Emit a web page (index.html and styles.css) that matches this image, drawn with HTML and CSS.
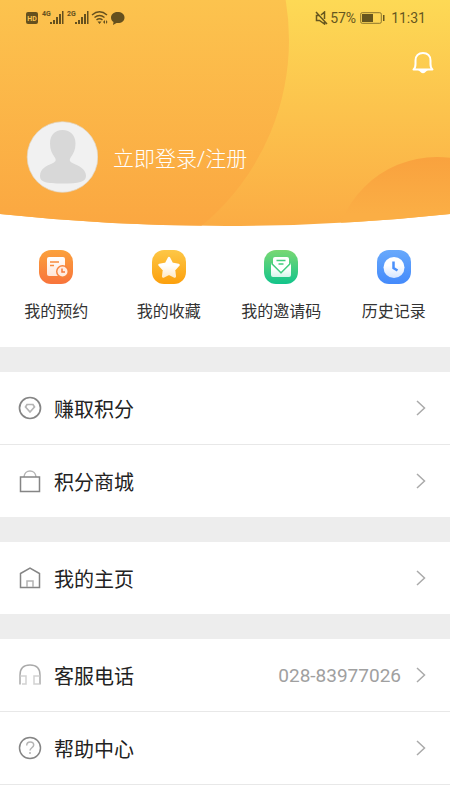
FILE: index.html
```html
<!DOCTYPE html>
<html lang="zh-CN">
<head>
<meta charset="utf-8">
<meta name="viewport" content="width=device-width, initial-scale=1">
<title>我的</title>
<link rel="stylesheet" href="styles.css">
</head>
<body>
<header class="hero">
  <svg class="hero-bg" viewBox="0 0 450 226" preserveAspectRatio="none" aria-hidden="true">
    <defs>
      <linearGradient id="base" x1="0" y1="0" x2="0" y2="1"><stop offset="0" stop-color="#fdd955"/><stop offset="1" stop-color="#fbac44"/></linearGradient>
      <linearGradient id="big" gradientUnits="userSpaceOnUse" x1="0" y1="0" x2="0" y2="226"><stop offset="0" stop-color="#fcc34e"/><stop offset="1" stop-color="#fba741"/></linearGradient>
      <linearGradient id="small" gradientUnits="userSpaceOnUse" x1="0" y1="157" x2="0" y2="214"><stop offset="0" stop-color="#f9a23e"/><stop offset="1" stop-color="#fbae45"/></linearGradient>
      <clipPath id="curve"><path d="M0 0H450V214Q225 238 0 214Z"/></clipPath>
    </defs>
    <g clip-path="url(#curve)">
      <rect width="450" height="226" fill="url(#base)"/>
      <circle cx="48" cy="40" r="241" fill="url(#big)"/>
      <circle cx="437" cy="260" r="103" fill="url(#small)"/>
    </g>
  </svg>
  <div class="status">
    <div class="status-side">
      <svg width="100" height="16" viewBox="0 0 100 16" fill="#65501e" aria-hidden="true">
        <rect x="1" y="2" width="12" height="12" rx="2"/>
        <text class="hd" x="7" y="11" text-anchor="middle">HD</text>
        <text class="net" x="17" y="6">4G</text>
        <path d="M25 12h2v2h-2zM28 10h2v4h-2zM31 7h2v7h-2zM34 4h2v10h-2zM37 1h1.500v13H37z"/>
        <text class="net" x="42" y="6">2G</text>
        <path d="M50 12h2v2h-2zM53 10h2v4h-2zM56 7h2v7h-2zM59 4h2v10h-2zM62 1h1.500v13H62z"/>
        <g fill="none" stroke="#65501e" stroke-width="1.500"><path d="M67 5Q74.500-1.500 82 5M69.500 7.500q5-4 10 0M71.500 10q3-2.500 6 0"/></g>
        <path d="M72.500 11.500h4l-2 2.500zM78 12l2-2v4zM81 10l1.500 2-1.500 2z"/>
        <path d="M92.500 2C88.500 2 86 4.500 86 7.500c0 2 1 3.500 2.500 4.500l-.5 3 3.500-2c5 .5 8-2 8-5.500S96.500 2 92.500 2z"/>
      </svg>
    </div>
    <div class="status-side">
      <svg width="13" height="14" viewBox="0 0 13 14" fill="none" stroke="#66561f" stroke-width="1.500" aria-hidden="true"><path d="M1 1l11 12M9.500 8V1L6 4M4 4.500H1.500v5h3l5 3.500v-2"/></svg>
      <span>57%</span>
      <svg class="battery" width="25" height="12" viewBox="0 0 25 12" aria-hidden="true"><rect x=".7" y=".7" width="20.600" height="10.600" rx="1.500" fill="none" stroke="#8c762d"/><path fill="#66561f" d="M2 2h11v8H2zM23 3h1.500v6H23z"/></svg>
      <span>11:31</span>
    </div>
  </div>
  <div class="tools">
    <button class="bell" type="button" aria-label="消息">
      <svg width="22" height="24" viewBox="0 0 22 24"><path d="M1.500 18.500Q3.500 17 3.500 13V9.500C3.500 5 6.500 2 11 2s7.500 3 7.500 7.500V13q0 4 2 5.500z" fill="none" stroke="#fff" stroke-width="2" stroke-linejoin="round"/><path d="M6 19h10q-1.500 1-2.500 2-2.500 2.500-5 0-1-1-2.500-2z" fill="#fff"/></svg>
    </button>
  </div>
  <a class="login" href="#login">
    <svg width="72" height="72" viewBox="0 0 72 72" aria-hidden="true"><circle cx="36.500" cy="36" r="35.300" fill="#f1f1f1" stroke="#dfd9cd" stroke-width=".7"/><path d="M36.500 9c-8 0-12.500 5.500-12.500 13.500 0 6 2 10 4.500 13.500 2 3 1.500 4.500-1.500 6C20 45 14 48 14 55c0 6 6 7.500 22.500 7.500S60 61 60 55c0-7-7-10-13.500-13-3-1.500-3.500-3-1.500-6 2.500-3.500 4.500-7.500 4.500-13.500C49.500 14.500 44.500 9 36.500 9z" fill="#d8d8d8"/></svg>
    <span>立即登录/注册</span>
  </a>
</header>
<main>
  <nav class="quick">
    <a href="#booking">
      <svg width="36" height="36" viewBox="0 0 36 36" aria-hidden="true">
        <defs><linearGradient id="q1" x1="0" y1="0" x2="0" y2="1"><stop offset="0" stop-color="#fba13c"/><stop offset="1" stop-color="#f8743b"/></linearGradient><linearGradient id="w1" x1="0" y1="0" x2="0" y2="1"><stop offset="0" stop-color="#fff"/><stop offset="1" stop-color="#ffe6d8"/></linearGradient></defs>
        <rect x="1" y="1" width="34" height="34" rx="12" fill="url(#q1)"/><rect x="9" y="8" width="18" height="19" rx="2" fill="url(#w1)"/><path d="M12 13h9M12 16.500h4" stroke="#f88b3c" stroke-width="1.500"/><circle cx="24.500" cy="22.500" r="5" fill="#f8833b" stroke="#f8833b" stroke-width="3"/><circle cx="24.500" cy="22.500" r="5" fill="#ffece1"/><path d="M24 19.500V23h3" fill="none" stroke="#f8783b" stroke-width="1.500"/></svg>
      <span>我的预约</span>
    </a>
    <a href="#favorites">
      <svg width="36" height="36" viewBox="0 0 36 36" aria-hidden="true">
        <defs><linearGradient id="q2" x1="0" y1="0" x2="0" y2="1"><stop offset="0" stop-color="#fdc746"/><stop offset="1" stop-color="#fca00d"/></linearGradient><linearGradient id="w2" x1="0" y1="0" x2="0" y2="1"><stop offset=".4" stop-color="#fff"/><stop offset="1" stop-color="#ffebca"/></linearGradient></defs>
        <rect x="1" y="1" width="34" height="34" rx="12" fill="url(#q2)"/><path d="M18 9l3 5.800 6.500 1.200-4.500 5 .8 6.500L18 24.700l-5.800 2.800.8-6.500-4.500-5 6.500-1.200z" fill="url(#w2)" stroke="url(#w2)" stroke-width="2.500" stroke-linejoin="round"/></svg>
      <span>我的收藏</span>
    </a>
    <a href="#invite">
      <svg width="36" height="36" viewBox="0 0 36 36" aria-hidden="true">
        <defs><linearGradient id="q3" x1="0" y1="0" x2="0" y2="1"><stop offset="0" stop-color="#79d873"/><stop offset="1" stop-color="#12c48b"/></linearGradient><linearGradient id="w3" x1="0" y1="0" x2="0" y2="1"><stop offset=".4" stop-color="#fff"/><stop offset="1" stop-color="#d4f5e9"/></linearGradient></defs>
        <rect x="1" y="1" width="34" height="34" rx="12" fill="url(#q3)"/><path d="M10 15V10q0-2 2-2h12q2 0 2 2v5l-8 8z" fill="#fff"/><path d="M13.500 11.500h9M15.500 15h5" stroke="#41ce7e" stroke-width="1.500"/><path d="M8 14l10 10.500L28 14v12q0 2-2 2H10q-2 0-2-2z" fill="url(#w3)"/><path d="M8.500 14.500L18 24l9.500-9.500" fill="none" stroke="#41ce7e" stroke-width="1.200"/></svg>
      <span>我的邀请码</span>
    </a>
    <a href="#history">
      <svg width="36" height="36" viewBox="0 0 36 36" aria-hidden="true">
        <defs><linearGradient id="q4" x1="0" y1="0" x2="0" y2="1"><stop offset="0" stop-color="#68a9fc"/><stop offset="1" stop-color="#448afb"/></linearGradient><linearGradient id="w4" x1="0" y1="0" x2="0" y2="1"><stop offset=".4" stop-color="#fff"/><stop offset="1" stop-color="#d5e5ff"/></linearGradient></defs>
        <rect x="1" y="1" width="34" height="34" rx="12" fill="url(#q4)"/><circle cx="18" cy="18.500" r="10.500" fill="url(#w4)"/><path d="M17.500 12.500v6.500l4 2.500" fill="none" stroke="#4a90fb" stroke-width="2.500"/></svg>
      <span>历史记录</span>
    </a>
  </nav>
  <section class="group">
    <a class="row" href="#earn">
      <svg class="icon" viewBox="0 0 24 24"><circle cx="12" cy="12" r="10.500" stroke-width="1.700"/><path class="pale" d="M9 8.500h6l1.500 2.500-4.500 5L7.500 11z" stroke-width="1.700"/></svg>
      <span class="name">赚取积分</span>
      <svg class="chevron" viewBox="0 0 10 16"><path d="M1 1l7.500 7L1 15"/></svg>
    </a>
    <a class="row" href="#mall">
      <svg class="icon" viewBox="0 0 24 24"><path class="pale" d="M6 8C6.500 0 17.500 0 18 8"/><path d="M2.500 8h19v14.500h-19z"/></svg>
      <span class="name">积分商城</span>
      <svg class="chevron" viewBox="0 0 10 16"><path d="M1 1l7.500 7L1 15"/></svg>
    </a>
  </section>
  <section class="group">
    <a class="row" href="#home">
      <svg class="icon" viewBox="0 0 24 24"><path d="M2.500 7.500L12 2l9.500 5.500v14h-19z"/><path class="pale" d="M9 21v-6h6v6"/></svg>
      <span class="name">我的主页</span>
      <svg class="chevron" viewBox="0 0 10 16"><path d="M1 1l7.500 7L1 15"/></svg>
    </a>
  </section>
  <section class="group">
    <a class="row" href="tel:028-83977026">
      <svg class="icon" viewBox="0 0 24 24"><path d="M2 21.500V12C2 5 6 2 12 2s10 3 10 10v9.500" stroke="#aaa"/><path class="faint" d="M2.500 13H8v8H4M21.500 13H16v8h5.500"/></svg>
      <span class="name">客服电话</span>
      <span class="value">028-83977026</span>
      <svg class="chevron" viewBox="0 0 10 16"><path d="M1 1l7.500 7L1 15"/></svg>
    </a>
    <a class="row" href="#help">
      <svg class="icon" viewBox="0 0 24 24"><circle cx="12" cy="12" r="10.500"/><path class="pale" d="M8.700 9.500c0-5 7-4.500 7-.5 0 2.500-3.700 3-3.700 5.500M12 16v2"/></svg>
      <span class="name">帮助中心</span>
      <svg class="chevron" viewBox="0 0 10 16"><path d="M1 1l7.500 7L1 15"/></svg>
    </a>
  </section>
</main>
</body>
</html>
```
FILE: styles.css
```css
* { box-sizing: border-box; }
body {
  margin: 0;
  background: #fff;
  color: #222;
  font-family: Roboto, "Noto Sans CJK SC", sans-serif;
}
a { color: inherit; text-decoration: none; }
svg { display: block; flex: none; }

.hero {
  position: relative;
  padding-bottom: 33px;
}
.hero-bg {
  position: absolute;
  inset: 0;
  width: 100%;
  height: 100%;
  z-index: -1;
}
.status {
  display: flex;
  justify-content: space-between;
  align-items: center;
  height: 35px;
  padding: 0 24px 0 25px;
  color: #66561f;
  font-size: 14px;
}
.status-side { display: flex; align-items: center; gap: 2px; }
.battery { margin: 0 4px 0 2px; }
.hd { font-size: 7px; font-weight: 700; fill: #fcc34e; }
.net { font-size: 7px; font-weight: 700; }
.tools {
  display: flex;
  justify-content: flex-end;
  padding: 16px 16px 0;
}
.bell { padding: 0; border: 0; background: none; }
.login {
  display: flex;
  align-items: center;
  gap: 15px;
  margin-top: 46px;
  padding-left: 26px;
  color: #fff;
  font-size: 21px;
  font-weight: 300;
}

.quick {
  display: grid;
  grid-template-columns: repeat(4, 1fr);
  padding: 23px 0;
}
.quick a {
  display: flex;
  flex-direction: column;
  align-items: center;
  gap: 15px;
  color: #333;
  font-size: 16px;
  line-height: 24px;
}

.group { border-top: 25px solid #ededed; }
.row {
  display: flex;
  align-items: center;
  height: 72px;
  padding: 0 24px 0 18px;
}
.row + .row { border-top: 1px solid #e8e8e8; height: 73px; }
.group:last-child { border-bottom: 1px solid #e8e8e8; }
.icon {
  width: 24px;
  height: 24px;
  margin-right: 12px;
  fill: none;
  stroke: #858585;
  stroke-width: 1.5;
}
.pale { stroke: #b4b4b4; }
.faint { stroke: #d2d2d2; }
.name { flex: 1; font-size: 20px; }
.value { color: #a0a0a0; font-size: 19px; margin-right: 15px; }
.chevron {
  width: 10px;
  height: 16px;
  fill: none;
  stroke: #aaa;
  stroke-width: 1.5;
}
```
